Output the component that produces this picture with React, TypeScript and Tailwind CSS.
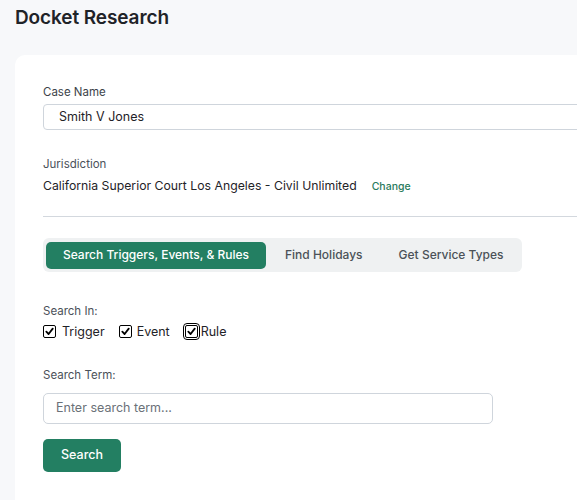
import React from "react";

function Check({ focus }: { focus?: boolean }) {
  const inner = (
    <span className="flex h-[13px] w-[13px] items-center justify-center rounded-[2px] border border-black bg-white">
      <svg width="9" height="9" viewBox="0 0 10 10">
        <path d="M1.5 5.2 L4 7.8 L8.6 1.8" fill="none" stroke="#000" strokeWidth="2" strokeLinecap="round" strokeLinejoin="round" />
      </svg>
    </span>
  );
  if (focus) {
    return (
      <span className="flex h-[17px] w-[17px] items-center justify-center rounded-[4px] border-[1.5px] border-black">
        {inner}
      </span>
    );
  }
  return inner;
}

export default function App() {
  return (
    <div
      className="h-[500px] w-[577px] overflow-hidden bg-[#f7f8fa] text-[#1f2328]"
      style={{ fontFamily: "Inter, 'Noto Sans', 'Liberation Sans', sans-serif" }}
    >
      <div className="px-[15px] pt-[7px]">
        <h1 className="text-[19px] font-semibold leading-[22px] tracking-[-0.1px] text-[#1f2328]">Docket Research</h1>
      </div>
      <div className="ml-[15px] mt-[26px] w-[600px] rounded-tl-[10px] bg-white pl-[28px] pt-[29px]">
        <div className="text-[11.5px] leading-[16px] text-[#3d434a]">Case Name</div>
        <div className="mt-[4px] flex h-[26px] items-center rounded-l-[4px] border border-[#cfd5dc] pl-[15px] text-[12.5px] text-[#1f2328]">
          Smith V Jones
        </div>
        <div className="mt-[26px] text-[11.5px] leading-[16px] text-[#4b5159]">Jurisdiction</div>
        <div className="mt-[5px] flex items-baseline text-[12.25px] leading-[17px] text-[#1f2328]">
          <span>California Superior Court Los Angeles - Civil Unlimited</span>
          <span className="ml-[15px] text-[10.5px] font-medium text-[#2a7a5c]">Change</span>
        </div>
        <div className="mt-[21px] h-px bg-[#d3d8de]" />
        <div className="mt-[21px] flex h-[34px] w-[479px] items-center rounded-[6px] bg-[#eff1f2] px-[3px]">
          <div className="flex h-[27px] w-[220px] items-center justify-center rounded-[5px] bg-[#237f62] text-[12px] font-medium text-white">
            Search Triggers, Events, &amp; Rules
          </div>
          <div className="ml-[19px] text-[12px] font-medium text-[#4b5158]">Find Holidays</div>
          <div className="ml-[36px] text-[12px] font-medium text-[#4b5158]">Get Service Types</div>
        </div>
        <div className="mt-[31px] text-[11.5px] leading-[16px] text-[#4b5159]">Search In:</div>
        <div className="mt-[4px] flex items-center text-[12.5px] leading-[17px] text-[#1f2328]">
          <Check />
          <span className="ml-[6px]">Trigger</span>
          <span className="ml-[14px]"><Check /></span>
          <span className="ml-[5px]">Event</span>
          <span className="ml-[13px]"><Check focus /></span>
          <span className="ml-[1px]">Rule</span>
        </div>
        <div className="mt-[27px] text-[11.5px] leading-[16px] text-[#4b5159]">Search Term:</div>
        <div className="mt-[10px] flex h-[31px] w-[450px] items-center rounded-[5px] border border-[#cfd5dc] pl-[12px] text-[12.5px] text-[#6b7178]">
          Enter search term...
        </div>
        <button className="mt-[15px] flex h-[33px] w-[78px] items-center justify-center rounded-[5px] bg-[#237f62] text-[12.5px] font-medium text-white">
          Search
        </button>
        <div className="h-[40px]" />
      </div>
    </div>
  );
}
